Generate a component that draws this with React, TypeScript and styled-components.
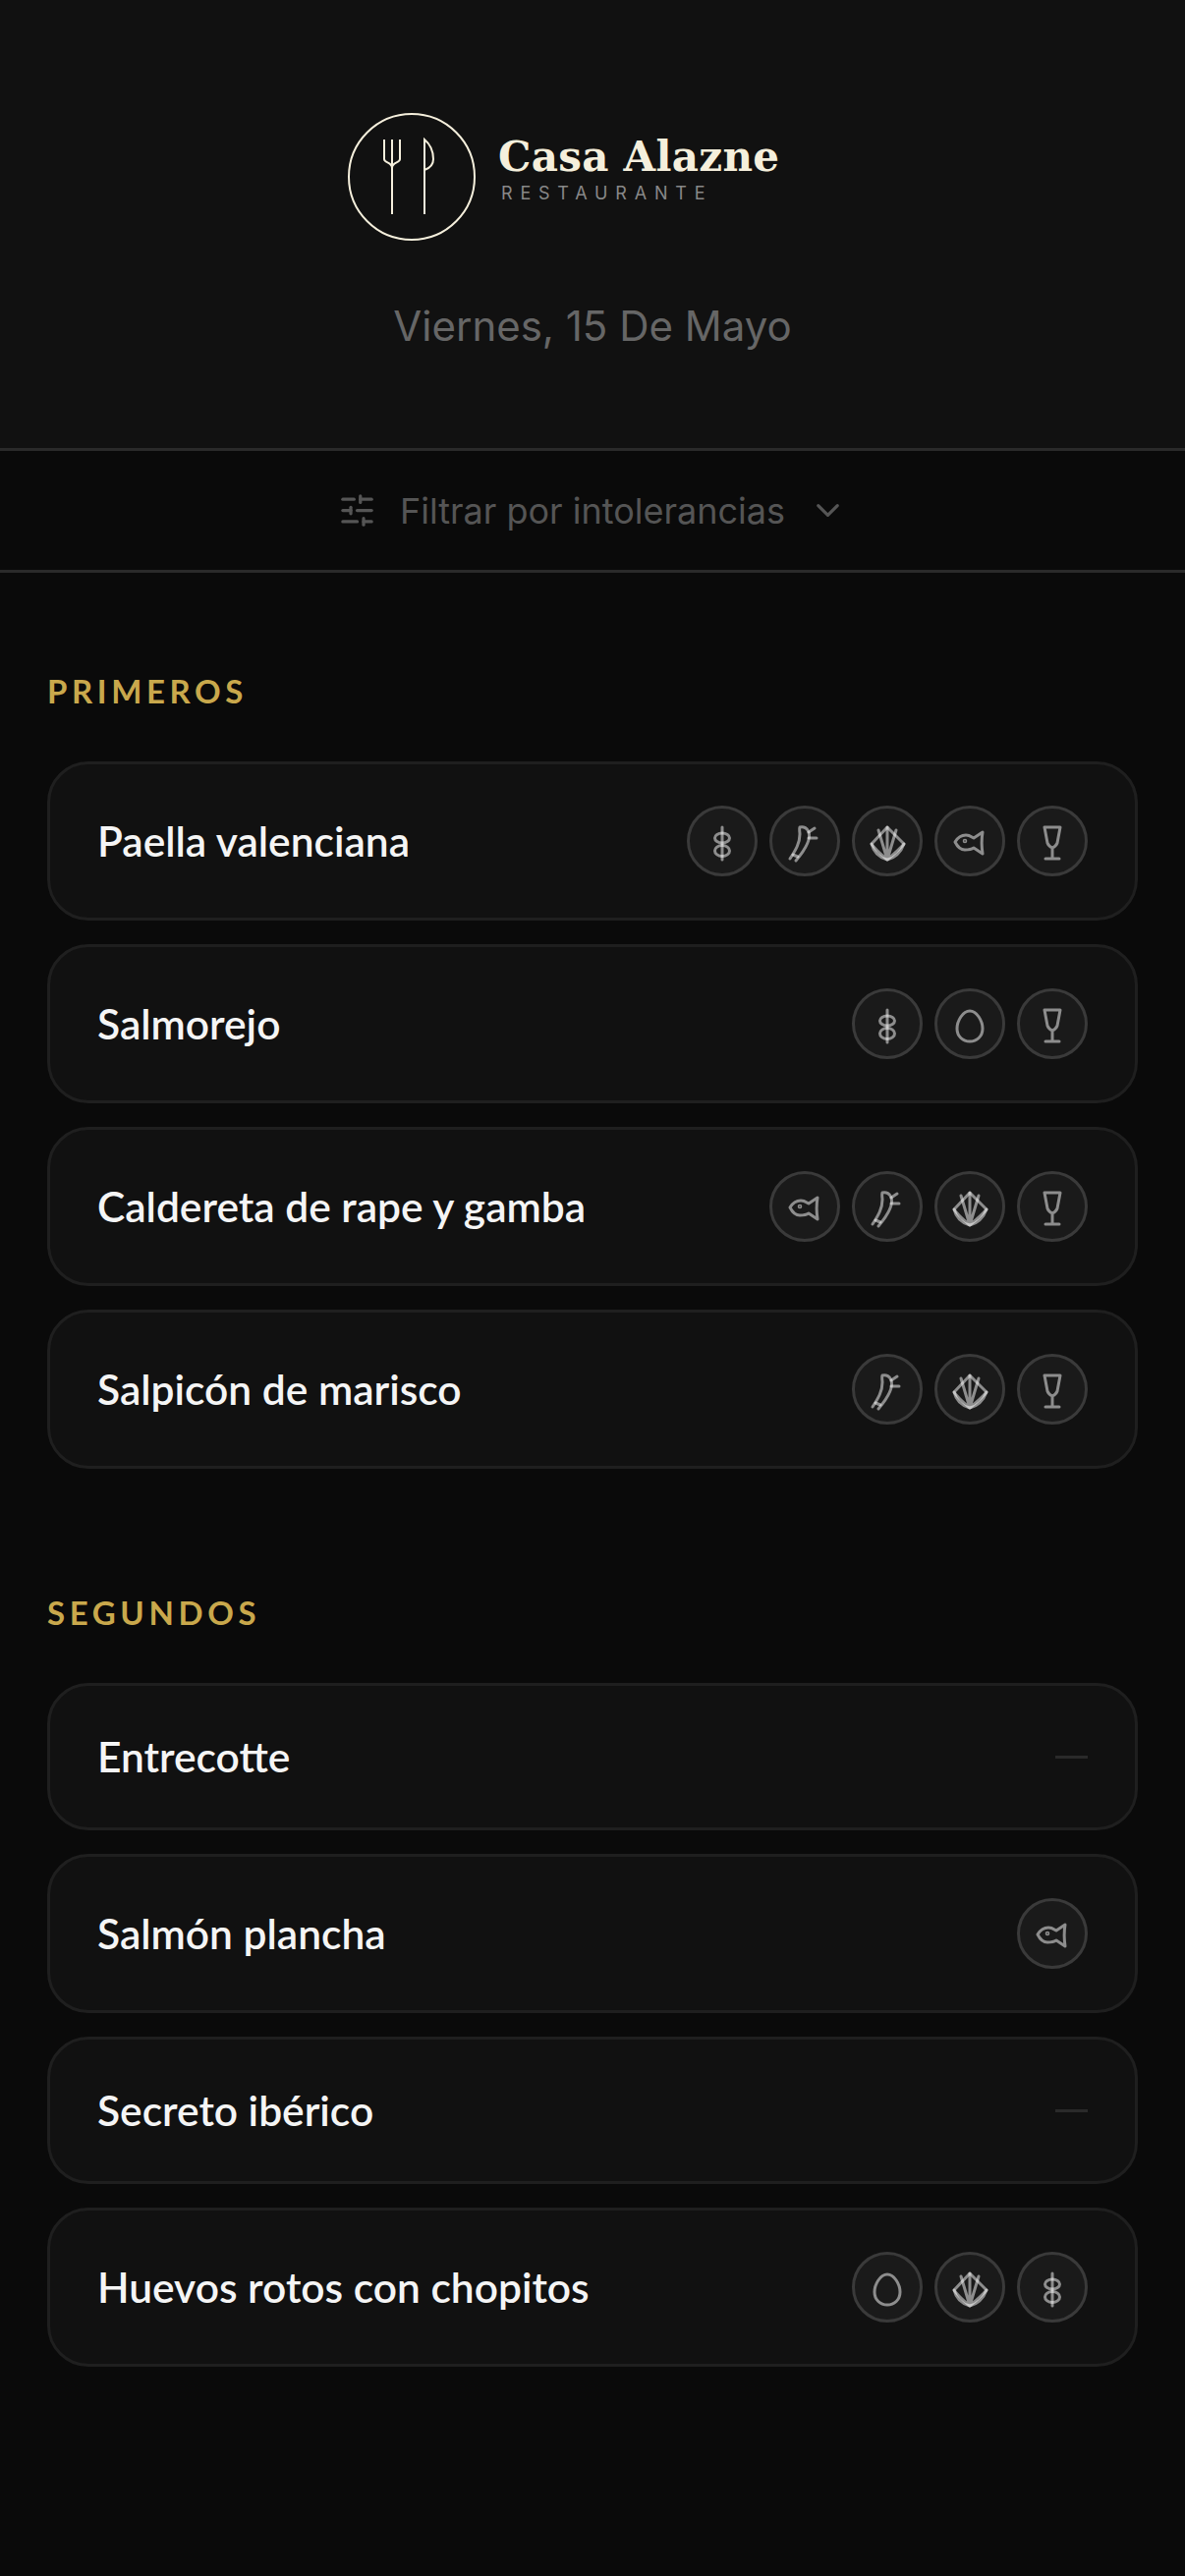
import React from "react";
import styled, { createGlobalStyle } from "styled-components";
import { SlidersHorizontal, ChevronDown } from "lucide-react";

const GlobalStyle = createGlobalStyle`
  html, body {
    margin: 0;
    padding: 0;
    background-color: #0a0a0a;
  }
  * {
    box-sizing: border-box;
  }
`;

const Page = styled.div`
  min-height: 2622px;
  background-color: #0a0a0a;
  font-family: "Inter", sans-serif;
`;

const Header = styled.header`
  height: 459px;
  padding-top: 115px;
  background-color: #111111;
  border-bottom: 3px solid #2a2a2a;
  display: flex;
  flex-direction: column;
  align-items: center;
`;

const Brand = styled.div`
  width: 498px;
  display: flex;
  align-items: center;
  gap: 23px;
`;

const BrandText = styled.div`
  display: flex;
  flex-direction: column;
  padding-bottom: 16px;
`;

const BrandName = styled.div`
  font-family: "DejaVu Serif", serif;
  font-weight: 700;
  font-size: 42px;
  line-height: 50px;
  letter-spacing: 0.3px;
  color: #f5efdc;
`;

const BrandSub = styled.div`
  margin-left: 3px;
  font-size: 18px;
  line-height: 24px;
  letter-spacing: 7.8px;
  color: #888888;
`;

const DateLine = styled.div`
  margin-top: 60px;
  font-size: 42px;
  line-height: 54px;
  color: #666666;
`;

const FilterBar = styled.div`
  height: 124px;
  display: flex;
  align-items: center;
  justify-content: center;
  gap: 24px;
  border-bottom: 3px solid #2a2a2a;
  color: #555555;
  font-size: 36px;
`;

const Main = styled.main`
  padding: 96px 48px 0;
  display: flex;
  flex-direction: column;
  gap: 122px;
`;

const Section = styled.section`
  display: flex;
  flex-direction: column;
`;

const SectionTitle = styled.h2`
  margin: 0 0 48px;
  font-family: "Lato", sans-serif;
  font-weight: 700;
  font-size: 33px;
  line-height: 48px;
  letter-spacing: 4.6px;
  color: #c9a84c;
`;

const CardList = styled.div`
  display: flex;
  flex-direction: column;
  gap: 24px;
`;

const Card = styled.div`
  padding: 42px 48px;
  display: flex;
  align-items: center;
  justify-content: space-between;
  background-color: #111111;
  border: 3px solid #1f1f1f;
  border-radius: 42px;
`;

const DishName = styled.span`
  font-family: "Lato", sans-serif;
  font-weight: 600;
  font-size: 42.5px;
  line-height: 60px;
  color: #f5f5f5;
`;

const IconRow = styled.div`
  display: flex;
  gap: 12px;
`;

const Badge = styled.div`
  width: 72px;
  height: 72px;
  border-radius: 50%;
  background-color: #1a1a1a;
  border: 3px solid #3a3a3a;
  display: flex;
  align-items: center;
  justify-content: center;
`;

const NoIcons = styled.span`
  width: 33px;
  height: 3px;
  background-color: #2a2a2a;
`;

type IconKind = "gluten" | "celery" | "shell" | "fish" | "wine" | "egg";

const glyphs: Record<IconKind, React.ReactNode> = {
  gluten: (
    <>
      <path d="M0 -14V19" />
      <ellipse cx="0" cy="-3" rx="7.5" ry="5" />
      <ellipse cx="0" cy="10" rx="7.5" ry="5.5" />
    </>
  ),
  celery: (
    <>
      <path d="M-15 18C-9 9 -5 2 -5 -7C-5 -10 -6 -12 -5 -14C-1 -15 3 -13 4 -9C6 -3 2 7 -9 20" />
      <path d="M4 -9L10 -13M4 -3H12M-12 14L-7 16" />
    </>
  ),
  shell: (
    <>
      <path d="M0 -14L-16 3C-14 11 -8 17 0 19C8 17 14 11 17 3Z" />
      <path d="M0 19V-14M0 19L-9 -11M0 19L9 -11M0 19C-6 14 -12 9 -16 3M0 19C6 14 12 9 17 3" />
    </>
  ),
  fish: (
    <>
      <path d="M-15 1C-12 -4 -8 -6 -4 -6C0 -6 2 -4 4 -3L13 -9C12 -3 12 6 13 13L4 7C1 9 -2 9 -5 9C-10 9 -13 5 -15 1Z" />
      <circle cx="-5" cy="0" r="0.8" />
    </>
  ),
  wine: <path d="M-8 -14H8L5 2C4 5 2 6 0 7C-2 6 -4 5 -5 2ZM0 7V18M-7 18H7" />,
  egg: <path d="M0 -13C7 -13 13 -3 13 5C13 13 7 18 0 18C-7 18 -13 13 -13 5C-13 -3 -7 -13 0 -13Z" />,
};

function AllergenIcon({ kind }: { kind: IconKind }): React.ReactElement {
  return (
    <Badge>
      <svg
        width="66"
        height="66"
        viewBox="-33 -33 66 66"
        fill="none"
        stroke="rgba(255,255,255,0.5)"
        strokeWidth="3"
        strokeLinecap="round"
        strokeLinejoin="round"
      >
        {glyphs[kind]}
      </svg>
    </Badge>
  );
}

const sections: { title: string; dishes: { name: string; icons: IconKind[] }[] }[] = [
  {
    title: "PRIMEROS",
    dishes: [
      { name: "Paella valenciana", icons: ["gluten", "celery", "shell", "fish", "wine"] },
      { name: "Salmorejo", icons: ["gluten", "egg", "wine"] },
      { name: "Caldereta de rape y gamba", icons: ["fish", "celery", "shell", "wine"] },
      { name: "Salpicón de marisco", icons: ["celery", "shell", "wine"] },
    ],
  },
  {
    title: "SEGUNDOS",
    dishes: [
      { name: "Entrecotte", icons: [] },
      { name: "Salmón plancha", icons: ["fish"] },
      { name: "Secreto ibérico", icons: [] },
      { name: "Huevos rotos con chopitos", icons: ["egg", "shell", "gluten"] },
    ],
  },
];

function App(): React.ReactElement {
  return (
    <Page>
      <GlobalStyle />
      <Header>
        <Brand>
          <svg width="130" height="130" viewBox="0 0 130 130" fill="none" stroke="#f5efdc" strokeWidth="2">
            <circle cx="65" cy="65" r="64" />
            <path d="M37 27V47C37 51 45 50 45 56V103M53 27V47C53 51 45 50 45 56M45 27V56" />
            <path d="M78 103V27C84 32 87 40 87 47C87 52 84 56 78 58" />
          </svg>
          <BrandText>
            <BrandName>Casa Alazne</BrandName>
            <BrandSub>RESTAURANTE</BrandSub>
          </BrandText>
        </Brand>
        <DateLine>Viernes, 15 De Mayo</DateLine>
      </Header>
      <FilterBar>
        <SlidersHorizontal size={39} strokeWidth={2} />
        <span>Filtrar por intolerancias</span>
        <ChevronDown size={39} strokeWidth={2} />
      </FilterBar>
      <Main>
        {sections.map((section) => (
          <Section key={section.title}>
            <SectionTitle>{section.title}</SectionTitle>
            <CardList>
              {section.dishes.map((dish) => (
                <Card key={dish.name}>
                  <DishName>{dish.name}</DishName>
                  {dish.icons.length > 0 ? (
                    <IconRow>
                      {dish.icons.map((icon) => (
                        <AllergenIcon key={icon} kind={icon} />
                      ))}
                    </IconRow>
                  ) : (
                    <NoIcons />
                  )}
                </Card>
              ))}
            </CardList>
          </Section>
        ))}
      </Main>
    </Page>
  );
}

export default App;
